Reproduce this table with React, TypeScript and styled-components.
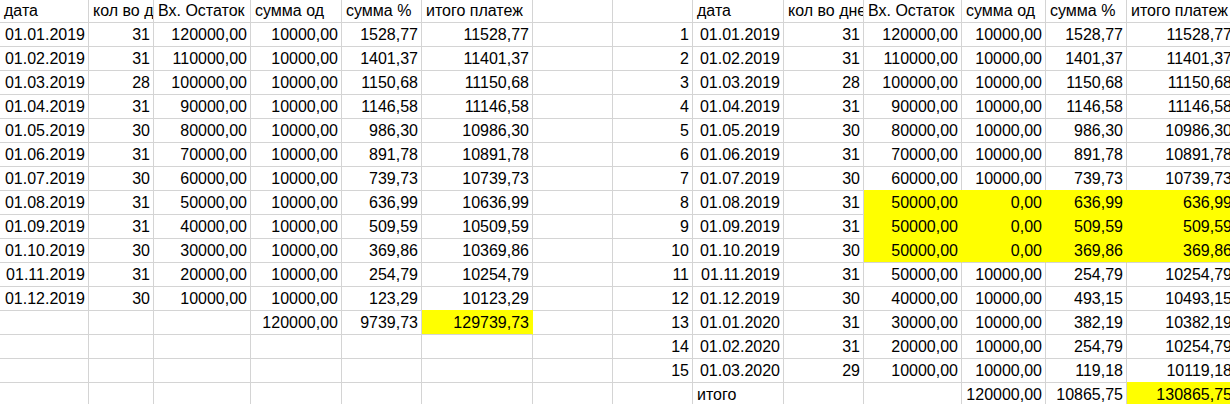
import styled, { createGlobalStyle } from 'styled-components';

const GlobalStyle = createGlobalStyle`
  html, body {
    margin: 0;
    padding: 0;
    background: #fff;
    overflow: hidden;
  }
  body {
    width: 1230px;
    height: 404px;
  }
`;

// widths of the sheet columns, gridline included
const COLS = [89, 65, 97, 91, 80, 111, 80, 80, 91, 80, 98, 84, 81, 109];

const Sheet = styled.div`
  display: grid;
  grid-template-columns: ${COLS.map((w) => w + 'px').join(' ')};
  grid-template-rows: 23px repeat(16, 24px);
  font-family: 'Liberation Sans', Arial, sans-serif;
  font-size: 16px;
  color: #000;
`;

const Cell = styled.div<{ $right?: boolean; $fill?: boolean }>`
  box-sizing: border-box;
  border-right: 1px solid ${(p) => (p.$fill ? '#ffff00' : '#d4d4d4')};
  border-bottom: 1px solid #d4d4d4;
  background: ${(p) => (p.$fill ? '#ffff00' : 'transparent')};
  box-shadow: ${(p) => (p.$fill ? '0 -1px 0 #ffff00' : 'none')};
  padding: 0 3px 0 4px;
  text-align: ${(p) => (p.$right ? 'right' : 'left')};
  white-space: nowrap;
  overflow: hidden;
  line-height: 23px;
`;

const HeadCell = styled(Cell)`
  line-height: 22px;
`;

type Row = string[];

const header = [
  'дата', 'кол во дней', 'Вх. Остаток', 'сумма од', 'сумма %', 'итого платеж', '',
  '', 'дата', 'кол во дней', 'Вх. Остаток', 'сумма од', 'сумма %', 'итого платеж',
];

const left: Row[] = [
  ['01.01.2019', '31', '120000,00', '10000,00', '1528,77', '11528,77'],
  ['01.02.2019', '31', '110000,00', '10000,00', '1401,37', '11401,37'],
  ['01.03.2019', '28', '100000,00', '10000,00', '1150,68', '11150,68'],
  ['01.04.2019', '31', '90000,00', '10000,00', '1146,58', '11146,58'],
  ['01.05.2019', '30', '80000,00', '10000,00', '986,30', '10986,30'],
  ['01.06.2019', '31', '70000,00', '10000,00', '891,78', '10891,78'],
  ['01.07.2019', '30', '60000,00', '10000,00', '739,73', '10739,73'],
  ['01.08.2019', '31', '50000,00', '10000,00', '636,99', '10636,99'],
  ['01.09.2019', '31', '40000,00', '10000,00', '509,59', '10509,59'],
  ['01.10.2019', '30', '30000,00', '10000,00', '369,86', '10369,86'],
  ['01.11.2019', '31', '20000,00', '10000,00', '254,79', '10254,79'],
  ['01.12.2019', '30', '10000,00', '10000,00', '123,29', '10123,29'],
  ['', '', '', '120000,00', '9739,73', '129739,73'],
];

const right: Row[] = [
  ['1', '01.01.2019', '31', '120000,00', '10000,00', '1528,77', '11528,77'],
  ['2', '01.02.2019', '31', '110000,00', '10000,00', '1401,37', '11401,37'],
  ['3', '01.03.2019', '28', '100000,00', '10000,00', '1150,68', '11150,68'],
  ['4', '01.04.2019', '31', '90000,00', '10000,00', '1146,58', '11146,58'],
  ['5', '01.05.2019', '30', '80000,00', '10000,00', '986,30', '10986,30'],
  ['6', '01.06.2019', '31', '70000,00', '10000,00', '891,78', '10891,78'],
  ['7', '01.07.2019', '30', '60000,00', '10000,00', '739,73', '10739,73'],
  ['8', '01.08.2019', '31', '50000,00', '0,00', '636,99', '636,99'],
  ['9', '01.09.2019', '31', '50000,00', '0,00', '509,59', '509,59'],
  ['10', '01.10.2019', '30', '50000,00', '0,00', '369,86', '369,86'],
  ['11', '01.11.2019', '31', '50000,00', '10000,00', '254,79', '10254,79'],
  ['12', '01.12.2019', '30', '40000,00', '10000,00', '493,15', '10493,15'],
  ['13', '01.01.2020', '31', '30000,00', '10000,00', '382,19', '10382,19'],
  ['14', '01.02.2020', '31', '20000,00', '10000,00', '254,79', '10254,79'],
  ['15', '01.03.2020', '29', '10000,00', '10000,00', '119,18', '10119,18'],
  ['', 'итого', '', '', '120000,00', '10865,75', '130865,75'],
];

// which cells carry the yellow fill: [row, col] in sheet coordinates
const isFilled = (r: number, c: number) => {
  if (r === 12 && c === 5) return true;
  if (r >= 7 && r <= 9 && c >= 10) return true;
  if (r === 15 && c === 13) return true;
  return false;
};

export default function App() {
  const rows: Row[] = [];
  for (let r = 0; r < 16; r++) {
    const l = left[r] || ['', '', '', '', '', ''];
    const rt = right[r] || ['', '', '', '', '', '', ''];
    rows.push([...l, '', ...rt]);
  }

  return (
    <>
      <GlobalStyle />
      <Sheet>
        {header.map((h, c) => (
          <HeadCell key={'h' + c}>{h}</HeadCell>
        ))}
        {rows.map((row, r) =>
          row.map((v, c) => (
            <Cell
              key={r + '-' + c}
              $right={v !== 'итого'}
              $fill={isFilled(r, c)}
            >
              {v}
            </Cell>
          ))
        )}
      </Sheet>
    </>
  );
}
